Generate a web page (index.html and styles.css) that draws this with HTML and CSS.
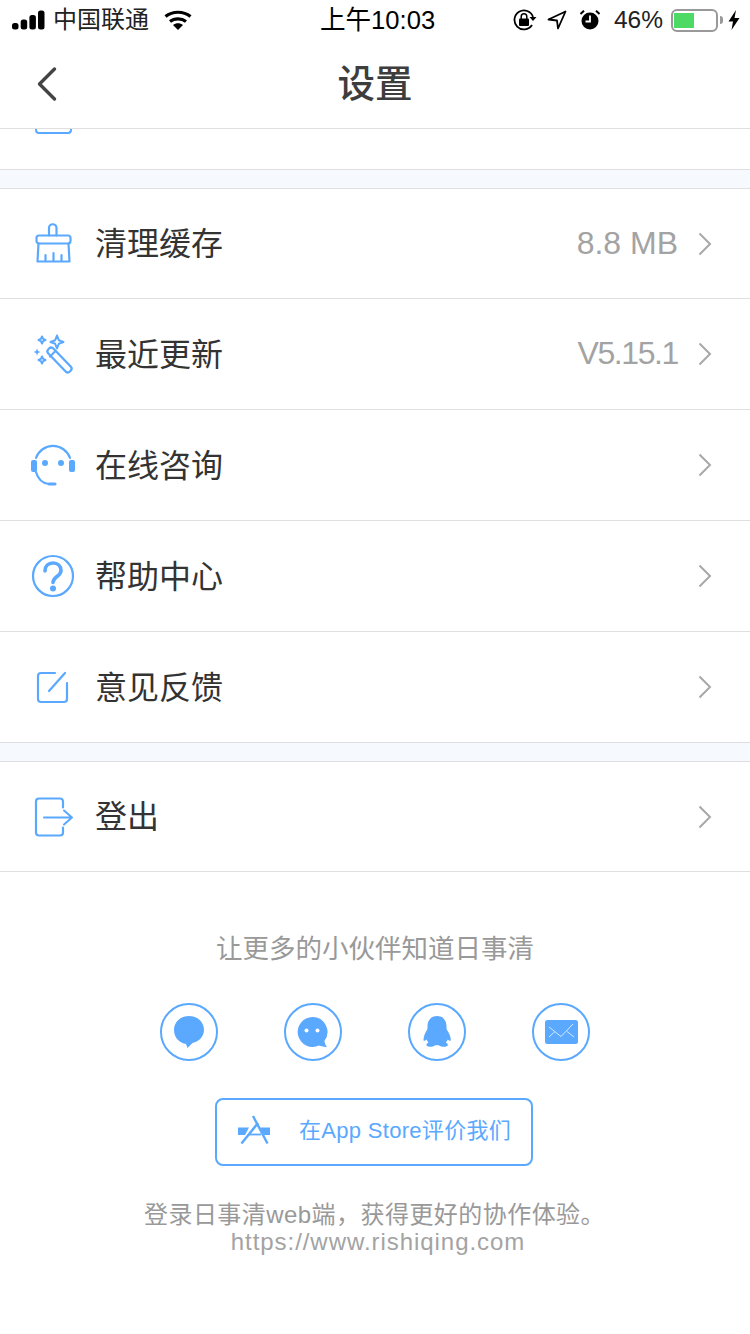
FILE: index.html

```html
<!DOCTYPE html>
<html lang="zh-CN">
<head>
  <meta charset="UTF-8">
  <meta name="viewport" content="width=device-width, initial-scale=1.0">
  <title>设置</title>
  <link rel="stylesheet" href="styles.css">
</head>
<body>
  <div class="status-bar">
    <div class="status-left">
      <svg class="signal" width="33" height="20" viewBox="0 0 33 20" fill="#000">
        <rect x="0" y="13" width="6.5" height="6.5" rx="2.5"/>
        <rect x="8.7" y="9.5" width="6.5" height="10" rx="2.5"/>
        <rect x="17.4" y="5" width="6.5" height="14.5" rx="2.5"/>
        <rect x="26" y=".5" width="6.5" height="19" rx="2.5"/>
      </svg>
      <span class="carrier">中国联通</span>
      <svg class="wifi" width="28" height="20" viewBox="0 0 28 20" fill="none" stroke="#000" stroke-width="3.2">
        <path d="M1.5 6.5C8.5 .8 19.5 .8 26.5 6.5"/>
        <path d="M6 11.5c4.5-3.6 11.5-3.6 16 0"/>
        <path fill="#000" stroke="none" d="M9 15c3-2.2 7-2.2 10 0l-5 5z"/>
      </svg>
    </div>
    <div class="status-time">上午10:03</div>
    <div class="status-right">
      <svg class="lock" width="24" height="22" viewBox="0 0 24 22" fill="none" stroke="#000" stroke-width="1.8">
        <path d="M20 8A9.5 9.5 0 1 0 19 16"/>
        <path fill="#000" stroke="none" d="M16.5 8h7l-3.5 4z"/>
        <rect fill="#000" stroke="none" x="6" y="9.5" width="10" height="7.5" rx="1"/>
        <path stroke-width="1.5" d="M8.2 10V7.5a2.8 2.8 0 0 1 5.6 0V10"/>
      </svg>
      <svg class="loc" width="20" height="20" viewBox="0 0 20 20" fill="none" stroke="#000" stroke-width="1.8" stroke-linejoin="round">
        <path d="M18.5 1.5 1.5 9.5 10 10.5 11 18.5z"/>
      </svg>
      <svg class="alarm" width="20" height="20" viewBox="0 0 20 20">
        <circle cx="10" cy="11" r="8.5" fill="#000"/>
        <path d="M10 5.5V11.5H5.5" fill="none" stroke="#fff" stroke-width="1.8"/>
        <path d="M.5 4 4 .8M19.5 4 16 .8" stroke="#000" stroke-width="2"/>
      </svg>
      <span class="battery-pct">46%</span>
      <div class="battery">
        <div class="battery-fill"></div>
      </div>
      <div class="battery-tip"></div>
      <svg class="bolt" width="12" height="20" viewBox="0 0 12 20"><path d="M8 0 .5 11.5H5L3.5 20 11.5 8H6.5z" fill="#000"/></svg>
    </div>
  </div>

  <div class="nav-bar">
    <svg class="back" width="24" height="36" viewBox="0 0 24 36" fill="none" stroke="#444" stroke-width="3.4" stroke-linecap="round" stroke-linejoin="round">
      <path d="M19.5 3 4.5 18l15 15"/>
    </svg>
    <div class="nav-title">设置</div>
  </div>

  <div class="peek">
    <div class="peek-icon"></div>
  </div>

  <div class="gap"></div>

  <div class="row row-short">
    <svg class="row-icon" width="44" height="44" viewBox="0 0 44 44" fill="none" stroke="#5aa9ff" stroke-width="2.2" stroke-linejoin="round" stroke-linecap="round">
      <path d="M18 13.5V6a3.5 3.5 0 0 1 7.5 0V13.5"/>
      <rect x="5.500" y="13.5" width="34" height="8" rx="2.5"/>
      <path d="M7.500 21.5 6.500 39.5H38.500L37.500 21.5"/>
      <path d="M14.5 39V33M22.5 39V31M30.5 39V33"/>
    </svg>
    <span class="row-label">清理缓存</span>
    <span class="row-value">8.8 MB</span>
    <svg class="chevron" width="14" height="24" viewBox="0 0 14 24" fill="none" stroke="#a8a8a8" stroke-width="2"><path d="M1.5 1.5 12 12 1.5 22.5"/></svg>
  </div>

  <div class="row">
    <svg class="row-icon" width="44" height="44" viewBox="0 0 44 44" fill="none" stroke="#5aa9ff" stroke-width="2.2" stroke-linejoin="round" stroke-linecap="round">
      <rect x="13" y="24.5" width="31" height="7" rx="3" transform="rotate(46 28.5 28)"/>
      <path d="M19 24.5 24.5 19"/>
      <path stroke-width="2" d="M26 3.5l1.8 4.7 4.7 1.8-4.7 1.8L26 16.5l-1.8-4.7L19.5 10l4.7-1.8z"/>
      <path stroke-width="2" d="M11 4.5l1.1 2.4L14.5 8l-2.4 1.1L11 11.5 9.900 9.100 7.5 8l2.4-1.100z"/>
      <path fill="#5aa9ff" stroke="none" d="M6 16.5l1 2.5 2.5 1-2.5 1-1 2.5-1-2.5-2.5-1 2.5-1z"/>
      <path stroke-width="2" d="M11 24.5l1.1 2.4 2.4 1.1-2.4 1.1L11 31.5l-1.1-2.4L7.5 28l2.4-1.1z"/>
    </svg>
    <span class="row-label">最近更新</span>
    <span class="row-value row-version">V5.15.1</span>
    <svg class="chevron" width="14" height="24" viewBox="0 0 14 24" fill="none" stroke="#a8a8a8" stroke-width="2"><path d="M1.5 1.5 12 12 1.5 22.5"/></svg>
  </div>

  <div class="row">
    <svg class="row-icon" width="44" height="44" viewBox="0 0 44 44" fill="none" stroke="#5aa9ff" stroke-width="2.2" stroke-linecap="round">
      <path d="M5 15A18 18 0 0 1 39 15"/>
      <path d="M5 29Q8 40 18 41"/>
      <path stroke-width="3" d="M18 41H24"/>
      <rect fill="#5aa9ff" stroke="none" x="0" y="17" width="6" height="12" rx="2"/>
      <rect fill="#5aa9ff" stroke="none" x="38" y="17" width="6" height="12" rx="2"/>
      <circle fill="#5aa9ff" stroke="none" cx="14" cy="20" r="3"/>
      <circle fill="#5aa9ff" stroke="none" cx="30" cy="20" r="3"/>
    </svg>
    <span class="row-label">在线咨询</span>
    <svg class="chevron" width="14" height="24" viewBox="0 0 14 24" fill="none" stroke="#a8a8a8" stroke-width="2"><path d="M1.5 1.5 12 12 1.5 22.5"/></svg>
  </div>

  <div class="row">
    <svg class="row-icon" width="44" height="44" viewBox="0 0 44 44" fill="none" stroke="#5aa9ff" stroke-linecap="round">
      <circle cx="22" cy="22" r="20" stroke-width="2.2"/>
      <path stroke-width="3.6" d="M14 17c0-5 3.5-8 8-8s8 3 8 7.5c0 6-8 6-8 12"/>
      <circle fill="#5aa9ff" stroke="none" cx="22" cy="34.5" r="3"/>
    </svg>
    <span class="row-label">帮助中心</span>
    <svg class="chevron" width="14" height="24" viewBox="0 0 14 24" fill="none" stroke="#a8a8a8" stroke-width="2"><path d="M1.5 1.5 12 12 1.5 22.5"/></svg>
  </div>

  <div class="row">
    <svg class="row-icon" width="44" height="44" viewBox="0 0 44 44" fill="none" stroke="#5aa9ff" stroke-width="2.2" stroke-linecap="round">
      <path d="M24 8H10A3 3 0 0 0 7 11V34A3 3 0 0 0 10 37H33A3 3 0 0 0 36 34V18"/>
      <path d="M18 26 34 8"/>
    </svg>
    <span class="row-label">意见反馈</span>
    <svg class="chevron" width="14" height="24" viewBox="0 0 14 24" fill="none" stroke="#a8a8a8" stroke-width="2"><path d="M1.5 1.5 12 12 1.5 22.5"/></svg>
  </div>

  <div class="gap"></div>

  <div class="row row-short">
    <svg class="row-icon" width="44" height="44" viewBox="0 0 44 44" fill="none" stroke="#5aa9ff" stroke-width="2.2" stroke-linecap="round" stroke-linejoin="round">
      <path d="M32 12.5V6.5A3 3 0 0 0 29 3.5H8A3 3 0 0 0 5 6.5V37.5A3 3 0 0 0 8 40.5H29A3 3 0 0 0 32 37.5V32.5"/>
      <path stroke-width="2" d="M13 22.5H41M33 15.5 41 22.5 33 29.5"/>
    </svg>
    <span class="row-label">登出</span>
    <svg class="chevron" width="14" height="24" viewBox="0 0 14 24" fill="none" stroke="#a8a8a8" stroke-width="2"><path d="M1.5 1.5 12 12 1.5 22.5"/></svg>
  </div>

  <div class="footer">
    <div class="share-title">让更多的小伙伴知道日事清</div>
    <div class="share-icons">
      <div class="share-btn">
        <svg width="32" height="34" viewBox="0 0 32 34" fill="#5aa9ff">
          <path d="M16 1C7.5 1 1 7 1 15s6 13 12 14l1.5 4 5-5C26 26.5 31 21.5 31 15 31 7 24.5 1 16 1z"/>
        </svg>
      </div>
      <div class="share-btn">
        <svg width="32" height="32" viewBox="0 0 32 32">
          <path fill="#5aa9ff" d="M15.5 1a15 15 0 1 0 6.5 28.6c2.5 1 6 1.600 8 1.400-1-1-2-3-2.600-6A15 15 0 0 0 15.5 1z"/>
          <circle cx="9.5" cy="14.5" r="2" fill="#fff"/>
          <circle cx="20.5" cy="14.5" r="2" fill="#fff"/>
        </svg>
      </div>
      <div class="share-btn">
        <svg width="30" height="32" viewBox="0 0 30 32" fill="#5aa9ff">
          <path d="M15 0c6.5 0 9.5 5 9.5 10 0 2 0 3 .5 4 2 3 3.5 6 3.8 9.5.2 2-1.5 1.5-3 0-.5 1-1 2-2 3 2 .8 2.700 2.500 1.500 3.500-1.500 1.300-6 1-8.500-.8h-3.600C11 31 6.500 31.300 5 30c-1.200-1-.5-2.700 1.500-3.500-1-1-1.500-2-2-3-1.500 1.500-3.200 2-3 0C1.800 20 3 17 5 14c.5-1 .5-2 .5-4C5.500 5 8.500 0 15 0z"/>
        </svg>
      </div>
      <div class="share-btn">
        <svg width="33" height="24" viewBox="0 0 33 24">
          <rect width="33" height="24" rx="2.5" fill="#5aa9ff"/>
          <path d="M4 7l12 9.5L28 4M4 17l6-5.5M29 17l-7-5.5" fill="none" stroke="#d6e9ff" stroke-width="1"/>
        </svg>
      </div>
    </div>
    <div class="store-btn">
      <svg class="store-icon" width="33" height="30" viewBox="0 0 33 30" fill="none" stroke="#5aa9ff" stroke-width="2.4">
        <path d="M15 1 29.5 28.5"/>
        <path d="M20 8 3.5 28.5"/>
        <path fill="#5aa9ff" stroke="none" d="M0 12.5H11L7 20H0z"/>
        <path fill="#5aa9ff" stroke="none" d="M22 12.5H32V20H26z"/>
        <path stroke-width="1.8" d="M10 19.5H23"/>
      </svg>
      <span class="store-text">在App Store评价我们</span>
    </div>
    <div class="web-tip">登录日事清web端，获得更好的协作体验。</div>
    <div class="web-url">https://www.rishiqing.com</div>
  </div>
</body>
</html>
```

FILE: styles.css

```css
body {
  margin: 0;
  width: 750px;
  height: 1334px;
  overflow: hidden;
  background: #fff;
  font-family: "Liberation Sans", "Noto Sans CJK SC", sans-serif;
  color: #333;
}

.status-bar {
  height: 40px;
  display: grid;
  grid-template-columns: 1fr auto 1fr;
  align-items: center;
  color: #000;
  padding: 0 9px 0 12px;
}

.status-left,
.status-right {
  display: flex;
  align-items: center;
}

.status-right {
  justify-content: flex-end;
}

.carrier {
  font-size: 24px;
  line-height: 30px;
  margin-left: 8px;
  color: #222;
}

.wifi {
  margin-left: 15px;
}

.status-time {
  font-size: 25.6px;
  line-height: 34px;
  margin-left: 2px;
}

.lock {
  margin-right: 10px;
}

.loc {
  margin-right: 13px;
}

.alarm {
  margin-right: 14px;
}

.battery-pct {
  font-size: 24.5px;
  color: #222;
  margin-right: 8px;
}

.battery {
  width: 41px;
  height: 15px;
  border: 2px solid #999;
  border-radius: 6px;
  padding: 2px 1px;
}

.battery-fill {
  width: 20px;
  height: 15px;
  background: #4cd964;
}

.battery-tip {
  width: 3px;
  height: 8px;
  background: #999;
  border-radius: 0 3px 3px 0;
  margin-left: 2px;
}

.bolt {
  margin-left: 5px;
  margin-right: 1px;
}

.nav-bar {
  height: 88px;
  border-bottom: 1px solid #dfdfdf;
  display: grid;
  grid-template-columns: 1fr auto 1fr;
  align-items: center;
}

.back {
  margin-left: 35px;
}

.nav-title {
  font-size: 37.5px;
  line-height: 50px;
  font-weight: 500;
  color: #3d3d3d;
}

.peek {
  height: 40px;
  overflow: hidden;
}

.peek-icon {
  width: 33px;
  height: 3px;
  margin-left: 35px;
  border: 2px solid #5aa9ff;
  border-top: 0;
  border-radius: 0 0 4px 4px;
}

.gap {
  height: 18px;
  background: #f6f9fd;
  border-top: 1px solid #dfdfdf;
  border-bottom: 1px solid #dfdfdf;
}

.row + .gap {
  border-top: 0;
}

.row {
  height: 110px;
  border-bottom: 1px solid #dfdfdf;
  display: flex;
  align-items: center;
  padding: 0 38px 0 31px;
}

.row-short {
  height: 109px;
}

.row-icon {
  flex: none;
}

.row-label {
  flex: 1;
  margin-left: 20px;
  font-size: 32px;
  line-height: 44px;
  padding-top: 1px;
  color: #333;
}

.row-value {
  font-size: 32px;
  line-height: 44px;
  padding-bottom: 2px;
  color: #a3a3a3;
  margin-right: 20px;
}

.row-version {
  letter-spacing: -1.4px;
}

.footer {
  display: flex;
  flex-direction: column;
  align-items: center;
  padding-top: 59px;
}

.share-title {
  font-size: 26.5px;
  line-height: 36px;
  color: #999;
}

.share-icons {
  display: flex;
  gap: 66px;
  margin-top: 36px;
}

.share-btn {
  width: 54px;
  height: 54px;
  border: 2px solid #5aa9ff;
  border-radius: 50%;
  display: flex;
  align-items: center;
  justify-content: center;
}

.store-btn {
  width: 314px;
  height: 64px;
  margin-top: 37px;
  margin-right: 2px;
  border: 2px solid #5aa9ff;
  border-radius: 8px;
  display: flex;
  align-items: center;
}

.store-icon {
  margin-left: 21px;
  margin-bottom: 4px;
}

.store-text {
  margin-left: 28px;
  font-size: 22px;
  letter-spacing: 0.3px;
  line-height: 30px;
  padding-bottom: 3px;
  color: #5aa9ff;
}

.web-tip {
  margin-top: 33px;
  margin-right: 1px;
  font-size: 24px;
  letter-spacing: 0.45px;
  line-height: 32px;
  color: #999;
}

.web-url {
  margin-top: -2px;
  margin-left: 6px;
  font-size: 24px;
  letter-spacing: 0.95px;
  line-height: 26px;
  color: #a3a3a3;
}
```
